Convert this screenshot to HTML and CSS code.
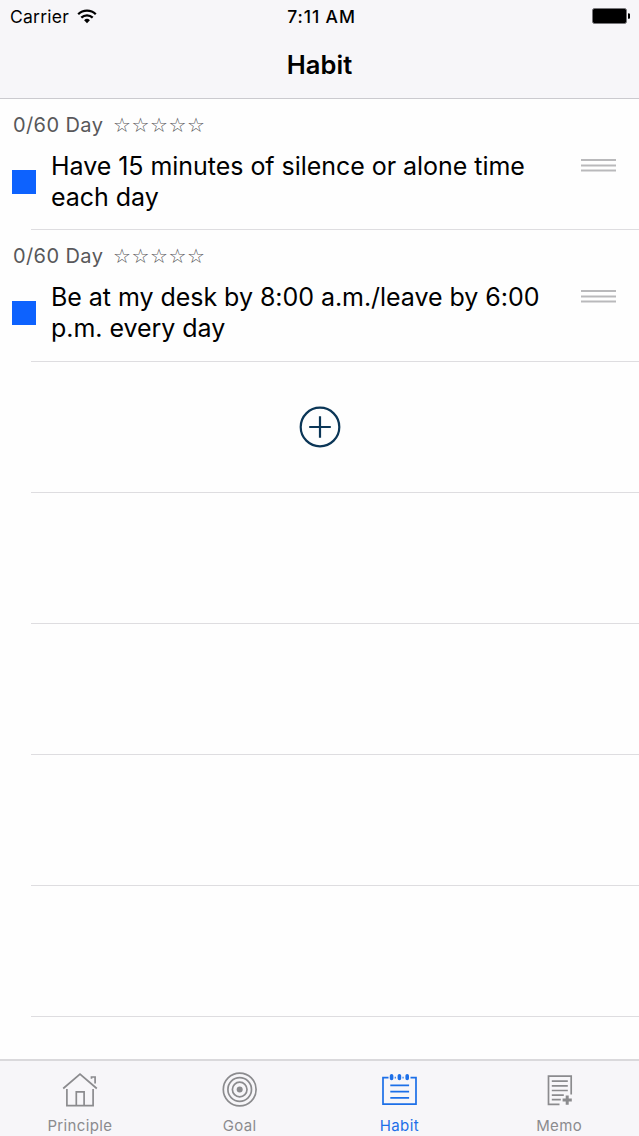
FILE: index.html
```html
<!DOCTYPE html>
<html lang="en">
  <head>
    <meta charset="UTF-8" />
    <meta name="viewport" content="width=device-width, initial-scale=1.0" />
    <title>Habit</title>
    <link rel="stylesheet" href="styles.css">
  </head>
  <body>
    <header class="header">
      <div class="status-bar">
        <div class="status-left">
          <span class="carrier">Carrier</span>
          <svg class="wifi" viewBox="0 0 20 15">
            <path d="M1.2 5.2a12.6 12.6 0 0 1 17.6 0M4.3 8.6a8.2 8.2 0 0 1 11.4 0" fill="none" stroke="currentColor" stroke-width="2.3" />
            <path d="M10 14.2l-2.9-3a4.1 4.1 0 0 1 5.8 0z" fill="currentColor" />
          </svg>
        </div>
        <span class="time">7:11 AM</span>
        <div class="status-right">
          <svg class="battery" viewBox="0 0 38 16">
            <rect x="0.5" y="0.5" width="34" height="15" rx="2" fill="#000" stroke="#77767a" />
            <path d="M36 5.2a2.8 2.8 0 0 1 0 5.6z" fill="#000" />
          </svg>
        </div>
      </div>
      <h1>Habit</h1>
    </header>

    <main class="habit-list">
      <section class="row">
        <p class="progress"><span class="days">0/60 Day</span><span class="stars">☆☆☆☆☆</span></p>
        <div class="habit">
          <span class="checkbox"></span>
          <p class="habit-text">Have 15 minutes of silence or alone time<br>each day</p>
          <svg class="handle" viewBox="0 0 35 14">
            <path d="M0 2h35M0 7.5h35M0 12.5h35" stroke="#b9b9bb" stroke-width="1.8" />
          </svg>
        </div>
      </section>

      <section class="row">
        <p class="progress"><span class="days">0/60 Day</span><span class="stars">☆☆☆☆☆</span></p>
        <div class="habit">
          <span class="checkbox"></span>
          <p class="habit-text">Be at my desk by 8:00 a.m./leave by 6:00<br>p.m. every day</p>
          <svg class="handle" viewBox="0 0 35 14">
            <path d="M0 2h35M0 7.5h35M0 12.5h35" stroke="#b9b9bb" stroke-width="1.8" />
          </svg>
        </div>
      </section>

      <section class="row add-row">
        <svg class="add" viewBox="0 0 42 42">
          <circle cx="21" cy="21" r="19.3" />
          <path d="M21 10.2v21.6M10.2 21h21.6" />
        </svg>
      </section>

      <section class="row"></section>
      <section class="row"></section>
      <section class="row"></section>
      <section class="row"></section>
    </main>

    <nav class="tab-bar">
      <a class="tab">
        <svg viewBox="0 0 36 36">
          <path d="M1.2 18.5L18 4l16.8 14.5M4.9 19v16.6h26.2V19M14.3 35.6V21.9h7.8v13.7M29.5 8.8V7h3.6v6.6" />
        </svg>
        <span>Principle</span>
      </a>
      <a class="tab">
        <svg viewBox="0 0 36 36">
          <circle cx="17.7" cy="19.5" r="16.4" />
          <circle cx="17.7" cy="19.5" r="11.8" />
          <circle cx="17.7" cy="19.5" r="7.3" />
          <circle class="solid" cx="17.7" cy="19.5" r="3" />
        </svg>
        <span>Goal</span>
      </a>
      <a class="tab active">
        <svg viewBox="0 0 36 36">
          <path d="M7.5 7.7H2v26.5h33V7.7h-5.5M13.7 7.7h1.1M21.5 7.7h1.1M9.3 15.3h18.8M9.3 21.6h18.8M9.3 27.9h18.8" />
          <path class="pin" d="M10.6 5.8v2.6M18.4 5.8v2.6M26.2 5.8v2.6" />
        </svg>
        <span>Habit</span>
      </a>
      <a class="tab">
        <svg viewBox="0 0 36 36">
          <path d="M18.5 34.4H7.5V6.1h22.7v18.3M10.8 11.2h16M10.8 15.9h16M10.8 20.5h16M10.8 25.1h12M10.8 29.7h9" />
          <path class="plus" d="M26.2 25.5v9.2M21.6 30.1h9.2" />
        </svg>
        <span>Memo</span>
      </a>
    </nav>
  </body>
</html>
```
FILE: styles.css
```css
* {
  box-sizing: border-box;
}

body {
  display: flex;
  flex-direction: column;
  height: 100vh;
  margin: 0;
  overflow: hidden;
  background-color: #fefefe;
  color: #000;
  font-family: Inter, "Liberation Sans", sans-serif;
}

.header {
  height: 99.4px;
  flex-shrink: 0;
  background-color: #f7f6f9;
  border-bottom: 1px solid #cbcacf;
}

.status-bar {
  display: grid;
  grid-template-columns: 1fr auto 1fr;
  align-items: center;
  height: 32px;
  padding: 0 9px 0 10px;
  font-size: 17.5px;
}

.status-left {
  display: flex;
  align-items: center;
  gap: 8px;
}

.carrier {
  letter-spacing: 0.25px;
}

.wifi {
  width: 20px;
  height: 15px;
}

.time {
  padding-left: 3px;
  font-weight: 500;
  letter-spacing: 0.9px;
}

.status-right {
  display: flex;
  justify-content: flex-end;
}

.battery {
  width: 38px;
  height: 16px;
}

h1 {
  margin: 0;
  font-size: 25.5px;
  font-weight: 600;
  letter-spacing: 0.1px;
  line-height: 66px;
  text-align: center;
}

.habit-list {
  flex: 1;
  overflow: hidden;
}

.row {
  height: 131.1px;
  padding: 10px 23px 0 12px;
  background: linear-gradient(#dedde0, #dedde0) 31px 100% / 100% 1px no-repeat;
}

.progress {
  display: flex;
  align-items: center;
  height: 31px;
  margin: 0;
  padding-left: 1px;
  color: #58585a;
}

.days {
  width: 100px;
  font-size: 20px;
  letter-spacing: 0.4px;
}

.stars {
  font-family: "DejaVu Sans", sans-serif;
  font-size: 20px;
  letter-spacing: 0.6px;
}

.habit {
  display: flex;
  align-items: flex-start;
}

.checkbox {
  width: 24px;
  height: 24px;
  margin: 30px 15px 0 0;
  background-color: #0d62fe;
}

.habit-text {
  flex: 1;
  margin: 11px 0 0;
  font-size: 25px;
  letter-spacing: -0.04px;
  line-height: 31px;
  white-space: nowrap;
}

.handle {
  width: 35px;
  height: 14px;
  margin-top: 18px;
}

.add-row {
  display: flex;
  justify-content: center;
  align-items: center;
  padding: 0;
}

.add {
  width: 42px;
  height: 42px;
  fill: none;
  stroke: #0b3657;
  stroke-width: 2.2;
}

.tab-bar {
  display: flex;
  height: 77px;
  flex-shrink: 0;
  background-color: #f7f6f9;
  border-top: 2px solid #dad9dc;
}

.tab {
  display: flex;
  flex: 1;
  flex-direction: column;
  align-items: center;
  padding-top: 9px;
  color: #8b8b8e;
  font-size: 15px;
  letter-spacing: 0.35px;
  line-height: 18px;
}

.tab svg {
  width: 36px;
  height: 36px;
  margin-bottom: 11px;
  overflow: visible;
  fill: none;
  stroke: currentColor;
  stroke-width: 1.7;
}

.tab.active {
  color: #1c6fe8;
}

.tab .solid {
  fill: currentColor;
  stroke: none;
}

.tab .pin {
  stroke-width: 3.6;
  stroke-linecap: round;
}

.tab .plus {
  stroke-width: 3;
}
```
